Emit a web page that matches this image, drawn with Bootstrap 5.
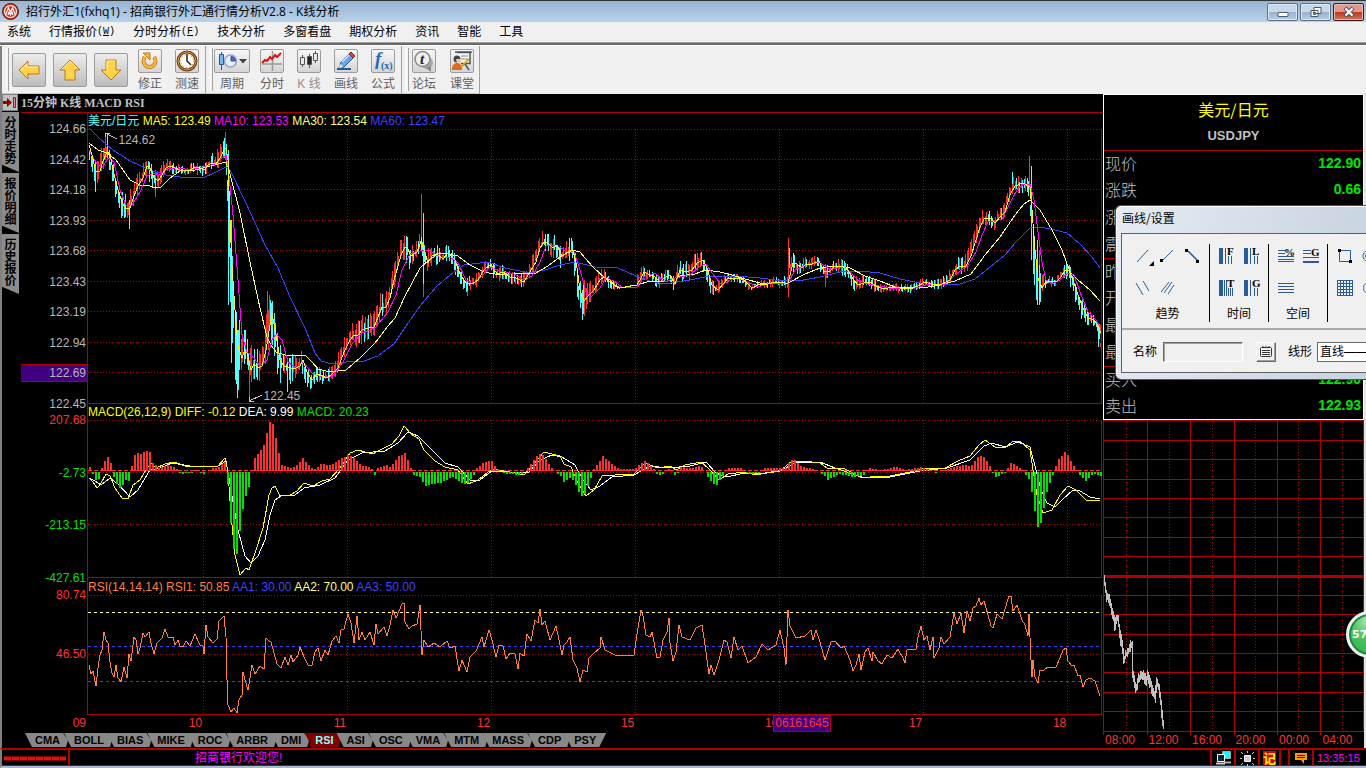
<!DOCTYPE html>
<html lang="zh-CN">
<head>
<meta charset="utf-8">
<meta name="viewport" content="width=device-width, initial-scale=1">
<title>招行外汇1(fxhq1) - 招商银行外汇通行情分析V2.8 - K线分析</title>
<link href="https://cdn.jsdelivr.net/npm/bootstrap@5.3.0/dist/css/bootstrap.min.css" rel="stylesheet">
<style>
:root{--line:#b00000;--hot:#ff3232;--dim:#b8b8b8}
body{font:12px/16px "Liberation Sans","Noto Sans CJK SC",sans-serif;background:#f0f0f0;color:#000}
button{font:inherit;padding:0;border:0;background:none;color:inherit}
a{color:inherit;text-decoration:none}
svg{display:block}
/* window frame */
.titlebar{height:22px;border-top:1px solid #333;background:linear-gradient(#98b4d3,#b9d1ea);padding:0 2px;font-family:"Open Sans","Noto Sans CJK SC",sans-serif}
.winbtn{width:31px;height:18px;border:1px solid #5c6f87;border-radius:2px;background:linear-gradient(#c6d8ea 50%,#98b2cc 50%,#b5cde4);box-shadow:inset 0 0 0 1px #dce8f4}
.winbtn.shut{border-color:#431422;background:linear-gradient(#e0998c 50%,#b83820 50%,#d07858);box-shadow:inset 0 0 0 1px #ebbab0}
.menubar{height:20px;padding-left:7px;gap:18px}
.menubar a{display:flex;align-items:center}
.hotkey{font:10px/16px "Liberation Mono",monospace}
.rim{height:4px;border-top:1px solid #a0a0a0;border-bottom:1px solid #fff;background:#696969}
/* toolbar */
.toolbar{height:48px;border-left:2px solid #808080}
.band{border-right:1px solid #a0a0a0;border-bottom:1px solid #c8c8c8;padding-left:10px;position:relative}
.band::before{content:"";position:absolute;left:4px;top:2px;bottom:2px;width:3px;border-right:1px solid #a0a0a0;border-left:1px solid #fff}
.bigbtn,.tile{border:1px solid #9c9c9c;border-radius:2px;background:linear-gradient(#f8f8f8,#d4d4d4);display:grid;place-items:center}
.bigbtn{width:34px;height:34px;background:linear-gradient(#ececec,#bdbdbd)}
.tile{width:24px;height:24px}
.tool{color:#606060;width:24px;padding-top:2px}
.tool .tile{margin-bottom:3px}
.tool.wide,.tool.wide .tile{width:36px}
/* left rail */
.rail{width:19px;border:0;background:#000}
.pin{width:16px;height:17px;background:#c0c0c0;border:1px solid #808080;display:grid;place-items:center}
.vtab{width:17px;height:60px;background:#8c8c8c;color:#000;font:bold 12px/12px "Noto Sans CJK SC",sans-serif;padding:4px 2px 0;align-items:flex-start;clip-path:polygon(0 0,100% 0,100% 100%,0 88%);margin-bottom:1px}
/* charts */
.desk{background:#000;color:var(--dim);border-left:2px solid #808080}
.charthead{height:19px;border-bottom:1px solid var(--line);font:bold 12px/18px "Liberation Serif","Noto Sans CJK SC",serif;color:#c0c0c0}
.panel-k{flex:291 1 0}.panel-macd{flex:174 1 0}.panel-rsi{flex:137 1 0}
.scale{width:66px;text-align:right;padding:8px 1px 0 0;margin-bottom:-8px}
.scale .cur{background:#400080;box-shadow:0 1px var(--line),0 -1px var(--line);margin-right:-1px;padding-right:1px}
.plot{border-left:1px solid var(--line)}
.legend{height:16px;white-space:pre}
.canvas{position:relative;flex:1 1 0;min-height:0}
.canvas svg,.intra svg{width:100%;height:100%;overflow:visible;shape-rendering:crispEdges}
.note{position:absolute}
.days{height:17px;color:var(--hot);text-align:right}
.day{position:relative;padding-right:1px}
.stamp{position:absolute;left:100%;margin-left:-6px;top:0;border:1px solid var(--line);background:#400080;line-height:15px;padding:0 1px;z-index:1}
.inds{height:16px;padding:1px 0 0 4px;font:bold 11px/14px "Liberation Sans",sans-serif;color:#000}
.ind{background:#888;height:14px;padding:0 10px;margin-right:-6px;clip-path:polygon(0 0,calc(100% - 7px) 0,calc(100% - 2px) 50%,calc(100% - 4px) 100%,7px 100%)}
.ind:nth-child(even){margin-right:-7px}
.ind.on{background:#800000;color:#8ff;position:relative;clip-path:polygon(0 0,100% 0,calc(100% - 5px) 100%,6px 100%)}
.ind.last{clip-path:polygon(0 0,100% 0,calc(100% - 7px) 100%,7px 100%)}
/* quotes */
.quotes{width:261px;position:relative}
.qbox{border:1px solid #fff}
.qhead{height:55px}
.qname{color:#ff0;font:16px/28px "Noto Sans CJK SC",sans-serif}
.qcode{font:bold 13px/26px "Liberation Sans",sans-serif;color:#c0c0c0}
.qtable{width:100%;border-collapse:separate;border-spacing:0}
.qtable th,.qtable td{height:27px;padding:0 2px 0 1px;vertical-align:top}
.qtable th{font:300 16px/24px "Noto Sans CJK SC",sans-serif;color:#c0c0c0}
.qtable td{font:bold 14px/24px "Liberation Sans",sans-serif;color:#00e600;text-align:right}
.qtable .rule>*{border-top:1px solid var(--line)}
.qtable tr:last-child>*{height:26px}
.intra{flex:1 1 0;min-height:0}
.hours{height:16px;color:var(--hot)}
.hours span{padding-left:2px}
.edge{width:2px;background:#e4e4e4}
/* floating drawing palette */
.palette{position:absolute;left:12px;right:-3px;top:111px;height:175px;border:1px solid #4a5563;border-right:0;border-radius:6px 0 0 6px;background:linear-gradient(100deg,#e4ebf3,#c7d2e0);padding-left:5px;color:#000;overflow:hidden;z-index:2;box-shadow:inset 1px 1px #fff}
.palette h2{font:12px/16px "Noto Sans CJK SC",sans-serif;margin:4px 0 7px 1px}
.pbody{border:1px solid #606060;border-right:0;background:#f0f0f0;height:140px;padding-top:10px;width:300px}
.pgroup{padding:0 4px;border-right:1px solid #000;text-align:center}
.pgroup:first-child{padding-left:8px}
.picons{display:grid;grid-template-columns:repeat(var(--n,2),25px);grid-auto-rows:24px;row-gap:8px;margin-bottom:6px}
.picons button{display:grid;place-items:center}
.picons text,.tile text{font-family:"Liberation Serif",serif;font-weight:bold}
.pform{border-top:2px solid #a8a8a8;margin-top:6px;padding:12px 0 0 11px;white-space:nowrap}
.pform input{width:80px;height:20px;border:1px solid;border-color:#696969 #fff #fff #696969;box-shadow:inset 1px 1px #a0a0a0;background:#f0f0f0}
.pform button{width:20px;height:20px;border:1px solid;border-color:#fff #696969 #696969 #fff;box-shadow:inset -1px -1px #a0a0a0}
.pform select{width:90px;height:20px;border:1px solid #696969;background:#fff;appearance:none;padding:0 2px;font:inherit}
.ball{position:absolute;right:-29px;bottom:90px;width:47px;height:47px;border-radius:50%;border:3px solid #f2f2f2;background:radial-gradient(circle at 50% 15%,#b8e8bc,#4cc45e 45%,#2fae4c);box-shadow:inset 0 0 0 2px #1f8a48;color:#fff;font:bold 11px/40px "DejaVu Sans",sans-serif;padding-left:3px;text-align:left;z-index:2}
/* status */
.status{height:20px;background:#000;border-top:2px solid var(--line);border-bottom:2px solid #a9b8cc;border-left:2px solid #808080;box-shadow:inset 0 -1px var(--line)}
.cell{border-left:2px solid var(--line);display:grid;place-items:center}
</style>
</head>
<body class="d-flex flex-column vh-100 overflow-hidden">

<header class="titlebar d-flex align-items-center flex-shrink-0">
  <svg width="17" height="17" viewBox="0 0 17 17"><circle cx="8.500" cy="8.500" r="8" fill="#c42818" stroke="#6b120c"/><circle cx="8.500" cy="8.500" r="6" fill="none" stroke="#f6d8c8" stroke-width="1.400"/><path d="M3.500 12 6.500 5l2 4 2-4 3 7M6 12l1-3 1.500 3L10 9l1 3" fill="none" stroke="#fff" stroke-width="1.200"/></svg>
  <span class="flex-grow-1 text-nowrap" style="margin-left:7px">招行外汇1(fxhq1) - 招商银行外汇通行情分析V2.8 - K线分析</span>
  <div class="d-flex" style="gap:2px">
    <button class="winbtn" aria-label="最小化"><svg class="m-auto" width="14" height="14"><rect x="2" y="7.500" width="10" height="4" rx="1" fill="#fff" stroke="#4b5666"/></svg></button>
    <button class="winbtn" aria-label="还原"><svg class="m-auto" width="14" height="14"><path d="M5 2.500h7v6H5zM2 5.500h7v6H2z" fill="#fff" stroke="#4b5666"/><path d="M4.500 7.500h2v2h-2z" fill="#9ab" stroke="#4b5666"/></svg></button>
    <button class="winbtn shut" aria-label="关闭"><svg class="m-auto" width="14" height="14"><path d="m3 3 8 8m0-8-8 8" stroke="#4b5666" stroke-width="4"/><path d="m3.500 3.500 7 7m0-7-7 7" stroke="#fff" stroke-width="2.200"/></svg></button>
  </div>
</header>

<nav class="menubar d-flex align-items-center flex-shrink-0 text-nowrap">
  <a href="#">系统</a><a href="#">行情报价<span class="hotkey">(<u>W</u>)</span></a><a href="#">分时分析<span class="hotkey">(<u>F</u>)</span></a><a href="#">技术分析</a><a href="#">多窗看盘</a><a href="#">期权分析</a><a href="#">资讯</a><a href="#">智能</a><a href="#">工具</a>
</nav>
<div class="rim flex-shrink-0"></div>

<div class="toolbar d-flex flex-shrink-0">
  <div class="band d-flex align-items-center" style="width:204px">
    <div class="d-flex" style="gap:7px">
      <button class="bigbtn" aria-label="后退"><svg width="24" height="24"><path d="M2 12 11 3v5h11v8H11v5z" fill="#ffd24a" stroke="#b87818" stroke-linejoin="round"/><path d="M4 12l6-6v3h11" fill="none" stroke="#fff0b0"/></svg></button>
      <button class="bigbtn" aria-label="上一个"><svg width="24" height="24"><path d="m12 2 10 10h-5v10H7V12H2z" fill="#ffd24a" stroke="#b87818" stroke-linejoin="round"/><path d="m4 11 8-8 7 7" fill="none" stroke="#fff0b0"/></svg></button>
      <button class="bigbtn" aria-label="下一个"><svg width="24" height="24"><path d="m12 22 10-10h-5V2H7v10H2z" fill="#ffd24a" stroke="#b87818" stroke-linejoin="round"/><path d="M8 12V3h8" fill="none" stroke="#fff0b0"/></svg></button>
    </div>
    <div class="d-flex" style="gap:13px;margin-left:10px">
      <button class="tool"><span class="tile"><svg width="20" height="20"><path d="M5 6a6 6 0 1 0 9 0" fill="none" stroke="#c07810" stroke-width="4"/><path d="M5 6a6 6 0 1 0 9 0" fill="none" stroke="#f8b840" stroke-width="2.400"/><path d="M3 2h7v7z" fill="#f8b840" stroke="#c07810"/></svg></span>修正</button>
      <button class="tool"><span class="tile"><svg width="22" height="22"><circle cx="11" cy="11" r="9" fill="#fffdf4" stroke="#6e3a10" stroke-width="3"/><circle cx="11" cy="11" r="9" fill="none" stroke="#e09a30"/><path d="M11 4v7l4 4" fill="none" stroke="#222" stroke-width="1.500"/><circle cx="11" cy="11" r="6.500" fill="none" stroke="#777" stroke-dasharray="1 2.400"/></svg></span>测速</button>
    </div>
  </div>
  <div class="band d-flex align-items-center" style="width:196px;padding-left:8px">
    <button class="tool wide"><span class="tile"><svg width="32" height="20"><path d="M5.500 1v18" stroke="#245a9c"/><path d="M3.500 3.500h4v10h-4z" fill="#7ab4ec" stroke="#245a9c"/><circle cx="14.500" cy="10" r="6" fill="#e8eef8" stroke="#8fa4c4" stroke-width="1.500"/><path d="M15 10V5.500a4.500 4.500 0 0 1 4.500 4.500z" fill="#506cc0" stroke="#3048a0"/><path d="M23 8h8l-4 4.500z" fill="#444"/></svg></span>周期</button>
    <div class="d-flex" style="gap:13px;margin-left:10px">
      <button class="tool"><span class="tile"><svg width="22" height="22"><path d="M1 14h20M11.500 1v20" stroke="#999" stroke-width="1.500"/><path d="m1 13 3-3 2 1 3-4 2 2 3-4 2 2 4-4" fill="none" stroke="#e01010" stroke-width="2"/></svg></span>分时</button>
      <button class="tool" disabled><span class="tile"><svg width="22" height="22" fill="#e8e8e8" stroke="#555"><path d="M4.500 5v12M11.500 4v14M17.500 1v12"/><path d="M2.500 7.500h4v7h-4zM15.500 3.500h4v7h-4z"/><path d="M9.500 6.500h4v8h-4z" fill="#222"/></svg></span><span style="color:#909090">K&nbsp;线</span></button>
      <button class="tool"><span class="tile"><svg width="22" height="22"><path d="M2 19h14" stroke="#245a9c" stroke-width="2"/><path d="M4 18l2-6L14 4l4 4-9 9z" fill="#68a8e4" stroke="#285890"/><path d="m7 12 8-8" stroke="#d0e8ff" stroke-width="1.500"/><path d="m14 4 2-2 4 4-2 2z" fill="#e04040" stroke="#902020"/><path d="m4 18 1-4 3 3z" fill="#fff"/></svg></span>画线</button>
      <button class="tool"><span class="tile"><svg width="22" height="22" fill="#2468b8"><text x="3" y="15" font-size="19" font-style="italic">f</text><text x="9" y="19" font-size="10">(x)</text></svg></span>公式</button>
    </div>
  </div>
  <div class="band d-flex align-items-center" style="width:78px">
    <div class="d-flex" style="gap:14px">
      <button class="tool"><span class="tile"><svg width="22" height="22"><circle cx="14" cy="13" r="6" fill="#a8a8a8"/><path d="m13 18 5 4v-6z" fill="#888"/><circle cx="9.500" cy="9" r="7.500" fill="#eee" stroke="#888" stroke-width="1.500"/><text x="7" y="14" font-size="15" font-style="italic" fill="#222">t</text></svg></span>论坛</button>
      <button class="tool"><span class="tile"><svg width="22" height="22"><path d="M6 2.500h13v11H10M4 2h17" fill="#fafafa" stroke="#456" stroke-width="1.500"/><path d="M10 6h7M10 9h7" stroke="#7a8894"/><circle cx="6" cy="9" r="3.500" fill="#444"/><path d="M5 9h5v4H6z" fill="#f0c8a0"/><path d="M1 20c0-5 2-7 5-7s5 2 5 7z" fill="#e06820"/><path d="m10 17 8-8" stroke="#e0a020" stroke-width="2"/><path d="m14 14 4 6" stroke="#456" stroke-width="1.500"/></svg></span>课堂</button>
    </div>
  </div>
</div>

<main class="desk d-flex flex-grow-1 overflow-hidden" style="min-height:0">
  <aside class="rail flex-shrink-0">
    <button class="pin" aria-label="收起"><svg width="14" height="13"><path d="M0 5h4V2l5 4.500L4 11V8H0z" fill="#900"/><path d="M10.500 1.500h2v10h-2z" fill="#d99" stroke="#c00"/></svg></button>
    <div style="height:1px"></div>
    <button class="vtab d-flex">分时走势</button>
    <button class="vtab d-flex">报价明细</button>
    <button class="vtab d-flex">历史报价</button>
  </aside>

  <section class="d-flex flex-column flex-grow-1" style="min-width:0">
    <div class="charthead flex-shrink-0">15分钟 K线 MACD RSI</div>

    <div class="d-flex panel-k" style="min-height:0">
      <div class="scale d-flex flex-column justify-content-between flex-shrink-0">
        <span>124.66</span><span>124.42</span><span>124.18</span><span>123.93</span><span>123.68</span><span>123.43</span><span>123.19</span><span>122.94</span><span class="cur">122.69</span><span>122.45</span>
      </div>
      <div class="plot d-flex flex-column flex-grow-1">
        <div class="legend"><span style="color:#5ff">美元/日元</span> <span style="color:#ff0">MA5: 123.49</span> <span style="color:#f0f">MA10: 123.53</span> <span style="color:#ffff80">MA30: 123.54</span> <span style="color:#4040ff">MA60: 123.47</span></div>
        <div class="canvas">
          <svg id="k" viewBox="88 129 1015 275" preserveAspectRatio="none"></svg>
          <span class="note" style="left:3%;top:1%">124.62</span>
          <span class="note" style="left:17.300%;top:94%">122.45</span>
        </div>
      </div>
    </div>

    <div class="d-flex panel-macd" style="min-height:0">
      <div class="scale d-flex flex-column justify-content-between flex-shrink-0" style="color:#00e000">
        <span style="color:#ff3232">207.68</span><span>-2.73</span><span>-213.15</span><span>-427.61</span>
      </div>
      <div class="plot d-flex flex-column flex-grow-1">
        <div class="legend"><span style="color:#ff0">MACD(26,12,9) DIFF: -0.12</span> <span style="color:#fff">DEA: 9.99</span> <span style="color:#00e000">MACD: 20.23</span></div>
        <div class="canvas"><svg id="m" viewBox="88 420 1015 158" preserveAspectRatio="none"></svg></div>
      </div>
    </div>

    <div class="d-flex panel-rsi" style="min-height:0">
      <div class="scale d-flex flex-column flex-shrink-0" style="color:#ff3232;padding-top:9px">
        <span style="margin-bottom:43px">80.74</span><span>46.50</span>
      </div>
      <div class="plot d-flex flex-column flex-grow-1">
        <div class="legend" style="height:17px;padding-top:1px"><span style="color:#ff8040">RSI(14,14,14) RSI1: 50.85</span> <span style="color:#4040ff">AA1: 30.00</span> <span style="color:#ffff80">AA2: 70.00</span> <span style="color:#4040ff">AA3: 50.00</span></div>
        <div class="canvas"><svg id="r" viewBox="88 595 1015 120" preserveAspectRatio="none"></svg></div>
      </div>
    </div>

    <div class="days d-flex flex-shrink-0">
      <div class="day flex-shrink-0" style="width:66px">09</div>
      <div class="day" style="flex:116">10</div><div class="day" style="flex:144">11</div><div class="day" style="flex:144">12</div><div class="day" style="flex:144">15</div><div class="day" style="flex:144">16<span class="stamp">06161645</span></div><div class="day" style="flex:144">17</div><div class="day" style="flex:144">18</div><div style="flex:36"></div>
    </div>
    <div class="inds d-flex flex-shrink-0">
      <button class="ind">CMA</button><button class="ind">BOLL</button><button class="ind">BIAS</button><button class="ind">MIKE</button><button class="ind">ROC</button><button class="ind">ARBR</button><button class="ind">DMI</button><button class="ind on">RSI</button><button class="ind">ASI</button><button class="ind">OSC</button><button class="ind">VMA</button><button class="ind">MTM</button><button class="ind">MASS</button><button class="ind">CDP</button><button class="ind last">PSY</button>
    </div>
  </section>

  <section class="quotes d-flex flex-column flex-shrink-0">
    <div class="qbox">
      <div class="qhead text-center"><div class="qname">美元/日元</div><div class="qcode">USDJPY</div></div>
      <table class="qtable">
        <tr class="rule"><th scope="row">现价</th><td>122.90</td></tr>
        <tr><th scope="row">涨跌</th><td>0.66</td></tr>
        <tr><th scope="row">涨幅</th><td></td></tr>
        <tr><th scope="row">震幅</th><td></td></tr>
        <tr class="rule"><th scope="row">昨收</th><td></td></tr>
        <tr><th scope="row">开盘</th><td></td></tr>
        <tr><th scope="row">最高</th><td></td></tr>
        <tr><th scope="row">最低</th><td></td></tr>
        <tr class="rule"><th scope="row">买入</th><td>122.90</td></tr>
        <tr><th scope="row">卖出</th><td>122.93</td></tr>
      </table>
    </div>
    <div class="intra"><svg id="d" viewBox="1103 420 261 312" preserveAspectRatio="none"></svg></div>
    <div class="hours row row-cols-6 g-0 flex-shrink-0">
      <span>08:00</span><span>12:00</span><span>16:00</span><span>20:00</span><span>00:00</span><span>04:00</span>
    </div>

    <div class="palette" role="dialog" aria-label="画线/设置">
      <h2>画线/设置</h2>
      <div class="pbody">
        <div class="d-flex" id="groups">
          <div class="pgroup"><div class="picons" style="--n:3" data-icons="ray,seg,ends,chan,tri"></div>趋势</div>
          <div class="pgroup"><div class="picons" data-icons="tF,tL,tT,tG"></div>时间</div>
          <div class="pgroup"><div class="picons" data-icons="pct,gold,lines"></div>空间</div>
          <div class="pgroup border-0"><div class="picons" data-icons="box,ring,grid,arc"></div></div>
        </div>
        <div class="pform d-flex align-items-center">
          <label for="nm">名称</label><input id="nm" type="text" style="margin:0 13px 0 6px">
          <button aria-label="列表"><svg class="m-auto" width="14" height="14" fill="none" stroke="#333"><rect x="1.500" y="2.500" width="11" height="9" rx="1"/><path d="M3 5.500h8M3 7.500h8M3 9.500h8M4 1v2M7 1v2M10 1v2"/></svg></button>
          <label for="shape" style="margin:0 5px 0 12px">线形</label>
          <select id="shape"><option>直线———</option></select>
        </div>
      </div>
    </div>
    <button class="ball">57</button>
  </section>
  <div class="edge flex-shrink-0"></div>
</main>

<footer class="status d-flex flex-shrink-0">
  <div class="d-flex align-items-center" style="width:66px"><svg width="66" height="7"><path d="M2 3.500h62" stroke="#700" stroke-width="5"/><path d="M2 3.500h62" stroke="#d11" stroke-width="3" stroke-dasharray="7 1"/></svg></div>
  <div class="cell d-block flex-grow-1" style="color:#f0f;padding-left:125px">招商银行欢迎您!</div>
  <div class="cell" style="width:24px"><svg width="16" height="14"><path d="M7.500.500h8v7h-8z" fill="#0ff" stroke="#aaa"/><path d="M9 11.500h7" stroke="#aaa" stroke-width="2"/><path d="M2.500 3.500h7v7h-7z" fill="#002838" stroke="#fff"/><path d="M1 12.500h9" stroke="#ccc" stroke-width="2"/></svg></div>
  <div class="cell" style="width:24px"><svg width="15" height="15"><path d="M4.500 4.500h6v6h-6z" fill="#ccc" stroke="#fff"/><path d="M7.500 0v2m0 11v2M0 7.500h2m11 0h2M1 1l2 2m9 9 2 2M14 1l-2 2M3 12l-2 2" stroke="#ccc"/></svg></div>
  <div class="cell" style="width:21px"><span style="background:#d00;color:#ff0;font:bold 13px/14px 'Noto Sans CJK SC',sans-serif">记</span></div>
  <div class="cell" style="width:9px"></div>
  <div class="cell" style="width:24px"><svg width="12" height="12"><path d="M0 1h12v7H9v4L6 8H0z" fill="#ff9a10"/><path d="M2 3.500h8M2 5.500h8" stroke="#402000"/></svg></div>
  <div class="cell d-block" style="width:54px;color:#f0f;font-size:11px;padding-left:3px">13:35:15</div>
</footer>

<script src="https://cdn.jsdelivr.net/npm/bootstrap@5.3.0/dist/js/bootstrap.bundle.min.js"></script>
<script>
const RED='#b00000', days=[203,347,491,635,779,923,1067];
const parse=s=>s.trim().split(/\s+/).map(p=>p.split(',').map(Number));
const at=(k,x)=>{for(let i=1;i<k.length;i++)if(x<=k[i][0]){const a=k[i-1],b=k[i];return a[1]+(b[1]-a[1])*(x-a[0])/(b[0]-a[0]||1)}return k[k.length-1][1]};
const path=(d,c,o='')=>`<path d="${d}" fill="none" stroke="${c}" ${o}/>`;
const line=(s,c)=>path('M'+s.trim().replace(/\s+/g,' '),c);
const h=y=>`M88 ${y+.5}H1102`;
const dots='stroke-dasharray="1 2"';
let seed=7;const rnd=()=>(seed=(seed*16807)%2147483647)/2147483647;
function frame(top,bottom,rows){
  return path(rows.map(h).join('')+days.map(x=>`M${x+.5} ${top}V${bottom}`).join(''),RED,dots)
    +path(`M88 ${bottom+.5}H1102M1101.500 ${top}V${bottom}`,RED);
}
/* moving averages */
const ma5=`89,145 92,155 96,172 100,171 103,161 107,152 110,154 113,170 118,190 122,202 126,209 130,208 134,196 138,186 143,178 147,166 150,168 154,178 158,181 162,175 166,168 170,166 175,168 180,170 185,171 190,170 195,167 200,168 204,170 208,165 212,163 216,164 220,158 224,150 226,148 228,160 230,220 232,266 235,310 238,346 242,358 244,352 247,353 251,370 254,364 258,368 262,366 266,350 270,325 272,313 274,324 277,341 280,360 284,366 288,367 294,369 300,366 303,360 307,372 312,380 317,374 322,376 327,378 332,374 338,368 344,352 350,340 354,335 358,335 362,330 368,328 374,327 378,317 382,307 386,307 390,298 394,280 398,266 401,255 405,247 407,247 411,256 417,252 421,241 424,250 428,263 432,256 437,254 443,259 448,253 455,260 460,274 466,283 472,284 478,280 484,270 491,264 497,274 503,272 510,277 516,278 524,282 530,272 536,262 540,248 544,242 548,243 553,248 557,245 562,256 568,252 573,250 577,268 580,290 584,301 588,296 594,290 600,280 604,277 610,280 616,286 622,288 630,286 637,285 640,280 644,272 650,275 655,277 660,282 664,278 670,275 675,284 680,270 686,272 692,270 697,263 703,260 707,268 712,285 718,290 724,283 728,278 734,278 740,278 746,282 752,288 760,284 768,284 775,282 784,283 788,283 790,275 793,263 797,264 802,268 806,264 812,264 819,261 824,271 829,272 835,266 842,266 848,270 853,279 858,285 864,283 870,282 876,286 884,289 892,287 900,288 910,289 918,286 925,282 934,285 942,284 950,280 955,270 960,266 966,266 971,256 976,240 980,227 984,219 990,218 995,223 1000,217 1005,212 1010,195 1015,186 1023,183 1030,187 1032,210 1035,250 1038,278 1042,288 1045,283 1050,281 1056,282 1061,277 1065,270 1069,270 1073,280 1077,292 1083,308 1088,318 1094,320 1098,326 1101,333`;
const ma10=`89,150 97,164 103,167 108,158 114,162 120,190 126,205 132,205 140,192 147,176 153,173 160,175 168,168 180,168 190,170 203,167 215,164 226,155 228,166 233,215 238,280 242,335 247,352 254,358 260,366 267,360 272,340 276,334 282,340 288,362 296,368 303,362 312,373 320,376 333,376 343,362 352,344 362,333 375,328 388,312 396,295 402,270 410,254 420,251 428,250 440,257 450,257 458,263 466,280 473,284 482,276 490,267 500,271 514,274 524,280 532,276 540,262 546,246 556,245 566,251 574,252 580,270 586,292 591,297 600,288 606,278 614,281 622,287 637,287 645,276 655,273 665,282 675,278 690,275 700,266 706,264 715,277 722,285 735,277 750,283 758,287 770,283 788,283 795,270 805,265 818,262 830,269 845,267 858,280 868,284 890,288 915,288 930,284 945,284 955,275 968,265 976,252 982,235 988,222 1002,219 1010,203 1018,188 1024,184 1030,184 1034,200 1038,232 1042,262 1046,280 1052,284 1060,280 1068,273 1074,275 1080,292 1088,312 1096,320 1100,327`;
const ma30=`89,143 98,150 107,153 116,160 130,180 140,185 150,186 155,188 161,187 170,178 180,171 195,170 210,166 226,162 229,170 240,213 250,262 260,308 267,337 271,345 276,352 288,356 305,355 312,362 318,369 330,372 346,370 360,358 375,343 388,326 395,318 404,298 413,281 420,268 428,261 438,254 444,253 458,256 470,265 484,272 500,275 516,273 534,274 548,266 560,257 572,250 580,252 592,266 606,279 617,287 625,287 637,285 650,281 665,282 680,276 695,274 705,270 720,272 732,275 745,279 760,283 788,283 805,274 820,268 835,266 850,268 865,276 880,281 895,287 910,287 928,287 940,285 955,281 971,274 985,255 1000,237 1015,215 1024,204 1030,200 1040,210 1052,230 1062,250 1070,272 1078,280 1090,290 1100,301`;
const ma60=`89,128 100,139 113,150 130,161 150,170 166,175 180,177 203,178 216,172 226,167 230,170 246,203 265,245 278,268 290,297 305,328 315,353 321,361 332,364 346,362 364,361 378,356 394,344 406,326 420,306 436,287 450,275 464,265 488,262 505,268 530,273 545,270 560,265 575,262 595,267 618,268 636,276 650,281 665,284 690,280 710,276 735,276 760,278 775,280 798,281 820,277 840,272 860,271 880,273 900,279 925,284 960,284 975,279 990,267 1005,255 1015,243 1030,228 1040,227 1055,230 1067,233 1080,244 1092,257 1100,268`;
/* half height of the candle range along the time axis */
const swing=parse('89,9 96,14 107,14 125,16 140,10 150,13 160,10 170,7 190,5 200,8 222,12 228,20 231,50 236,50 242,28 250,22 262,18 268,30 276,22 290,16 305,12 325,7 340,12 350,14 365,15 385,14 405,16 415,10 430,12 460,9 480,8 492,10 510,7 520,9 545,12 565,12 575,16 584,20 592,10 606,9 616,4 620,0 636,0 637,9 650,8 668,7 680,12 705,9 720,8 730,5 760,4 784,7 790,12 800,7 830,8 850,9 865,9 880,5 920,5 935,5 950,9 970,12 985,9 1000,8 1012,12 1030,9 1034,36 1040,18 1045,6 1060,5 1068,12 1082,12 1095,7 1101,11');
const mid=parse(ma5);
let up='',down='';
for(let i=0;i<675;i++){
  const x=Math.round(89+i*1.5), a=at(swing,x); if(a<1)continue;
  const c=at(mid,Math.min(x+2,1100)), t=c-a*(.15+.85*rnd()), b=c+a*(.15+.85*rnd());
  const slope=at(mid,Math.min(x+4,1100))-at(mid,x);
  const seg=`M${x+.5} ${Math.round(Math.max(t,131))}V${Math.round(Math.min(b,400))}`;
  if(rnd()<.5-slope*.09)up+=seg;else down+=seg;
}
up+='M105.500 133V160M225.500 132V160M249.500 360V399M267.500 291V340M421.500 194V250M423.500 260V297M788.500 238V297M1029.500 156V190M1039.500 250V300M1100.500 343V347M97.500 165V183M155.500 170V197M825.500 264V287M467.500 278V296';
down+='M95.500 160V192M107.500 134V150M129.500 200V229M228.500 150V305M231.500 220V363M237.500 330V398M423.500 213V284M582.500 290V320M789.500 248V268M1031.500 166V260M1037.500 240V305M1098.500 325V347M287.500 360V392M1012.500 172V184M270.500 300V320';
k.innerHTML=frame(129,403,[129,159,189,220,250,281,311,342,372])+path(up,'#ff3030')+path(down,'#50ffff')
 +line(ma60,'#4040ff')+line(ma30,'#ffff80')+line(ma10,'#ff00ff')+line(ma5,'#ffff00')
 +path('M105 133l12 6M105 137v-4h5M249 401l13-6M249 397v4h5','#c8c8c8');
/* MACD */
const hist=parse('89,4 92,-2 96,-10 99,-6 101,3 104,10 107,14 110,8 112,-2 115,-10 120,-18 124,-8 128,-9 131,5 135,19 139,16 145,20 149,19 152,8 158,3 168,6 175,3 180,-2 190,-1 195,1 203,-2 210,2 218,4 223,9 226,8 228,-32 231,-60 234,-85 236,-82 240,-52 243,-30 247,-18 250,-10 252,10 258,18 264,28 268,48 271,52 274,38 277,22 281,6 290,3 297,6 302,13 306,8 313,1 320,7 330,6 340,12 348,16 354,12 360,6 370,3 374,-3 376,3 385,6 390,4 397,14 404,18 408,8 412,-3 420,-5 424,-15 430,-12 440,-11 452,-5 465,-13 472,-5 476,3 484,9 490,11 496,2 505,-2 520,-3 527,3 535,14 540,18 545,12 552,1 560,-4 563,-10 570,-5 576,-15 580,-25 584,-22 590,-6 593,2 598,8 602,15 610,8 618,2 634,2 640,8 645,10 652,3 658,-4 664,-1 669,3 675,-4 680,4 690,3 700,5 706,-3 711,-11 716,-13 722,-4 727,3 740,3 748,-2 760,-1 762,3 785,3 789,9 793,12 800,5 815,1 822,-2 827,-8 838,-2 852,-5 862,-4 868,3 880,1 895,4 905,1 920,4 935,-1 950,3 962,6 970,5 978,15 984,14 990,3 994,-5 1005,-1 1010,8 1015,6 1022,1 1028,-7 1031,-20 1035,-45 1038,-60 1042,-42 1046,-20 1052,-3 1058,12 1065,20 1072,6 1080,-4 1085,-9 1092,-2 1100,-4');
let hp='',hn='';
for(let x=89;x<=1100;x+=3){const v=Math.round(at(hist,x));
  if(v>0)hp+=`M${x} ${471-v}h2V471h-2z`;else if(v<0)hn+=`M${x} 472h2v${-v}h-2z`}
const diff='89,478 93,482 97,488 100,485 106,474 110,476 115,488 122,498 128,499 133,485 140,480 146,470 151,463 156,468 165,464 174,462 185,466 197,467 218,466 225,458 228,472 231,515 235,555 240,575 246,568 249,570 256,550 263,528 269,495 272,488 275,486 280,496 290,495 297,491 304,483 313,486 322,481 330,479 340,468 350,453 358,450 365,452 373,454 378,451 392,444 399,436 404,426 411,434 419,439 424,450 435,461 445,467 458,470 468,484 478,480 492,469 510,472 524,475 532,466 544,452 552,454 560,456 564,464 571,467 578,483 586,496 594,490 602,476 615,475 634,474 645,463 658,468 670,466 676,470 685,465 701,462 708,468 719,480 728,474 745,472 755,475 780,471 792,461 803,461 820,463 827,468 845,469 862,478 870,477 890,476 910,472 925,468 945,468 958,461 970,456 979,445 985,440 995,447 1005,448 1012,442 1020,441 1030,450 1033,470 1037,495 1043,513 1052,510 1060,495 1068,486 1076,490 1086,500 1100,500';
const dea='89,478 95,481 101,485 110,478 118,484 130,497 138,490 150,470 160,468 172,463 190,466 218,466 226,461 231,490 238,530 245,556 251,563 258,556 265,540 270,515 275,500 281,496 295,495 304,488 320,485 335,478 348,460 362,453 385,451 398,443 408,432 418,436 432,450 445,463 458,467 470,480 480,480 492,471 510,472 528,473 540,460 552,455 562,457 575,465 583,480 591,490 600,486 612,477 634,475 650,466 668,468 690,466 706,462 716,473 726,477 745,473 760,474 782,470 797,462 820,462 835,468 862,477 890,477 920,471 947,468 970,460 984,446 992,443 1005,447 1018,442 1030,447 1036,470 1041,490 1047,503 1055,507 1062,500 1073,490 1080,491 1090,497 1100,499';
m.innerHTML=frame(420,577,[420,472,524])+path(h(470),'#ff3030','stroke-dasharray="4 2"')
 +line(dea,'#fff')+line(diff,'#ff0')+`<path d="${hp}" fill="#ff3030"/><path d="${hn}" fill="#00e000"/>`;
/* RSI */
r.innerHTML=frame(595,714,[595,654])+path(h(612),'#ffff80','stroke-dasharray="3 3"')+path(h(646)+h(681),'#4040ff','stroke-dasharray="3 3"')
 +line('89,665 91,674 93,671 96,686 98,668 100,655 102,650 104,632 106,640 108,643 110,662 112,673 114,677 116,665 118,678 121,682 124,667 127,678 129,654 131,661 134,637 136,640 138,654 140,648 143,633 145,637 149,632 151,643 154,654 157,643 162,638 165,629 168,637 173,637 175,645 178,640 180,646 183,647 186,641 190,646 195,634 200,645 203,646 204,654 206,625 208,637 213,643 217,639 219,621 224,616 226,637 227,680 228,705 231,712 234,708 237,713 239,700 242,695 243,672 245,680 248,690 250,678 252,665 255,674 260,666 264,669 266,638 269,641 271,642 274,653 277,664 281,668 285,657 288,665 291,655 293,662 298,655 300,647 304,657 308,665 312,665 315,652 318,648 321,661 325,650 328,655 332,641 336,636 339,643 341,630 344,629 348,614 351,623 354,643 357,616 359,640 362,632 365,640 370,632 374,645 376,624 378,634 384,627 387,636 390,625 393,610 396,618 402,604 404,603 405,622 409,629 412,626 417,624 420,605 422,655 424,640 428,647 434,643 440,647 447,641 450,648 455,646 459,671 462,660 467,672 470,657 476,651 482,637 484,647 489,630 492,640 496,657 499,645 503,646 506,659 510,653 515,654 518,669 520,653 524,656 527,634 531,641 535,620 538,623 540,609 542,625 545,621 550,640 556,626 559,640 562,655 564,645 567,642 570,637 573,660 577,668 580,682 583,670 587,672 589,658 594,653 600,648 601,637 605,650 615,655 634,655 637,634 641,610 643,616 646,635 650,637 652,632 657,658 660,657 663,640 667,632 669,618 670,643 673,661 676,652 679,625 682,637 690,640 696,628 702,625 705,645 709,674 711,665 714,675 719,660 724,640 727,642 731,658 734,637 738,650 742,646 748,663 756,657 762,644 768,650 776,645 780,630 784,648 786,665 788,610 790,626 796,638 805,636 811,630 813,640 816,630 820,642 825,660 831,642 835,641 841,648 844,646 850,660 853,671 856,665 859,654 861,670 865,652 868,648 872,661 873,652 878,661 882,664 887,655 892,658 898,649 903,658 905,663 907,650 916,649 918,637 921,626 924,640 927,636 930,650 933,637 934,658 939,648 941,637 944,644 950,637 954,613 957,624 961,613 964,633 967,611 970,621 973,608 976,606 979,598 981,605 984,601 988,615 991,626 993,628 997,614 1002,619 1005,609 1009,596 1011,596 1013,611 1017,605 1020,614 1022,620 1025,625 1028,636 1029,614 1031,660 1032,677 1033,660 1035,677 1038,683 1040,670 1044,670 1048,667 1056,667 1060,658 1063,650 1066,648 1068,661 1072,666 1074,665 1078,676 1080,675 1083,687 1086,680 1090,678 1095,681 1098,690 1100,696','#ff8040');
/* intraday */
const ys=[420,440,459,479,498,517,537,556,595,614,634,653,672,692,711,731],xs=[1103,1147,1190,1234,1277,1320,1363];
const tick=parse('1104,578 1105,585 1107,598 1108,596 1110,603 1113,614 1115,625 1118,617 1120,634 1122,646 1124,660 1126,655 1128,652 1131,644 1132,646 1133,676 1136,688 1140,676 1143,674 1146,681 1148,675 1151,686 1155,697 1157,683 1159,686 1161,702 1163,724');
let tk='';for(let x=1104;x<1164;x++){const y=at(tick,x),y2=at(tick,x+1);tk+=`M${x+.5} ${Math.round(Math.min(y,y2)-1-rnd()*5)}V${Math.round(Math.max(y,y2)+1+rnd()*5)}`}
d.innerHTML=path(ys.map(y=>`M1103 ${y+.5}H1364`).join('')+xs.map((x,i)=>`M${x+.5} 420V${i<6?735:732}`).join(''),RED)
 +path('M1103 576.500H1364',RED,'stroke-width="3"')+path([1126,1169,1212,1255,1298,1342].map(x=>`M${x+.5} 422V731`).join(''),RED,dots)+path(tk,'#c0c0c0');
/* palette icons */
const B='#2a5a9a',bars=(n,l)=>`<path d="M4 4h4v16H4z" fill="${B}"/><path d="${n}" stroke="${B}"/><text x="12" y="11" font-size="11">${l}</text>`;
const sq=(x,y)=>`<path d="M${x} ${y}h3v3h-3z"/>`;
const icons={
 ray:`<path d="M6 18 17 6" stroke="${B}"/><path d="M18 22h5v-5z"/>`,
 seg:`<path d="M6 17 17 6" stroke="${B}"/>`+sq(4,15),
 ends:`<path d="M7 7l10 10" stroke="${B}" stroke-width="1.500"/>`+sq(4,5)+sq(15,16),
 chan:`<path d="m5 7 7 12m0-14 6 10" stroke="${B}"/>`,
 tri:`<path d="M5 16 13 6m-5 11 8-11m-4 12 6-9" stroke="${B}"/>`,
 tF:bars('M10.500 4v16M13.500 12v8M16.500 12v8','F'),
 tL:bars('M10.500 4v16M14.500 12v8M17.500 12v8','L'),
 tT:bars('M9.500 4v16M11.500 4v16M13.500 12v8M15.500 12v8M17.500 12v8','T'),
 tG:bars('M10.500 4v16M14.500 12v8M17.500 12v8','G'),
 pct:`<path d="M4 6.500h7M4 9.500h7M4 12.500h16M4 15.500h16M4 17.500h16" stroke="${B}"/><text x="10" y="12" font-size="11">%</text>`,
 gold:`<path d="M4 6.500h8M4 9.500h8M4 13.500h16" stroke="${B}"/><path d="M4 18h16" stroke="${B}" stroke-width="2"/><text x="12" y="12" font-size="11">G</text>`,
 lines:`<path d="M4 7.500h16M4 10.500h16M4 13.500h16M4 16.500h16" stroke="${B}"/>`,
 box:`<path d="M6.500 6.500h11v11h-11z" fill="none" stroke="${B}"/>`+sq(5,5)+sq(16,16),
 ring:`<circle cx="10" cy="12" r="5" fill="none" stroke="${B}"/><circle cx="10" cy="12" r="2.500" fill="none" stroke="${B}"/>`,
 grid:`<path d="M4.500 4v16M7.500 4v16M10.500 4v16M13.500 4v16M16.500 4v16M19.500 4v16M4 4.500h16M4 7.500h16M4 10.500h16M4 13.500h16M4 16.500h16M4 19.500h16" stroke="${B}"/>`,
 arc:`<path d="M12 7c-6 0-7 3-6 5-1 2 0 5 6 5" fill="none" stroke="${B}"/>`};
document.querySelectorAll('[data-icons]').forEach(g=>{g.innerHTML=g.dataset.icons.split(',').map(n=>`<button aria-label="${n}"><svg width="24" height="24">${icons[n]}</svg></button>`).join('')});
</script>
</body>
</html>
